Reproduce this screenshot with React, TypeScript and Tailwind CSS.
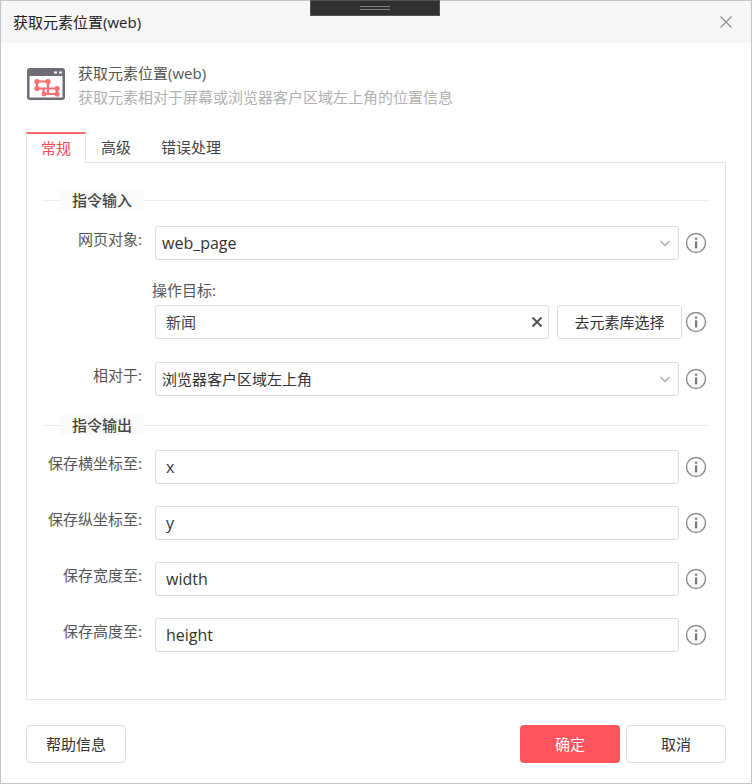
import React from "react";

const font = { fontFamily: '"Open Sans", "Noto Sans CJK SC", sans-serif' };

function Info() {
  return (
    <svg width="22" height="22" viewBox="0 0 22 22" className="shrink-0">
      <circle cx="11" cy="11" r="9.5" fill="none" stroke="#8c8c8c" strokeWidth="1.4" />
      <rect x="10" y="5.5" width="2.2" height="2.2" rx="0.6" fill="#777" />
      <rect x="10" y="9.2" width="2.2" height="7.3" rx="0.4" fill="#777" />
    </svg>
  );
}

function Chevron() {
  return (
    <svg width="10" height="7" viewBox="0 0 10 7" className="shrink-0">
      <path d="M0.5 1 L5 5.5 L9.5 1" fill="none" stroke="#a8a8a8" strokeWidth="1.4" />
    </svg>
  );
}

function Row({ label, value, select, latin, mt }: { label: string; value: string; select?: boolean; latin?: boolean; mt: string }) {
  return (
    <div className={`flex items-start ${mt}`}>
      <div className="w-[128px] pr-[13px] pt-[3px] text-right text-[15px] leading-5 text-[#555] whitespace-nowrap">{label}</div>
      <div className={`flex h-[34px] w-[524px] items-center justify-between rounded-[3px] border border-[#dcdcdc] bg-white pr-[8px] text-[#333] ${latin ? "text-[16px]" : "text-[15px]"} ${select ? "pl-[6px]" : "pl-[10px]"}`}>
        <span>{value}</span>
        {select && <Chevron />}
      </div>
      <div className="ml-[6px] mt-[6px]"><Info /></div>
    </div>
  );
}

function Section({ title, mt }: { title: string; mt: string }) {
  return (
    <div className={`relative ml-[15px] mr-[15px] h-[20px] ${mt}`}>
      <div className="absolute left-0 right-0 top-[10px] h-px bg-[#ececec]" />
      <div className="absolute left-[18px] top-0 h-[20px] w-[84px] bg-[#fafafa] text-center text-[15px] font-medium leading-5 text-[#444]">{title}</div>
    </div>
  );
}

export default function App() {
  return (
    <div style={font} className="relative flex h-[784px] w-[752px] flex-col border border-[#c4c4c4] bg-white">
      <div className="absolute left-[309px] top-[-1px] flex h-[16px] w-[130px] items-center justify-center border border-[#555] bg-[#303030]">
        <div className="h-[4px] w-[30px] border-y border-[#808080]" />
      </div>
      <div className="flex h-[42px] shrink-0 items-center justify-between bg-[#f6f6f6] pl-[12px] pr-[19px]">
        <span className="text-[15px] text-[#222]">获取元素位置(web)</span>
        <svg width="12" height="12" viewBox="0 0 12 12">
          <path d="M0.5 0.5 L11.5 11.5 M11.5 0.5 L0.5 11.5" stroke="#8a8a8a" strokeWidth="1.1" fill="none" />
        </svg>
      </div>

      <div className="flex flex-1 flex-col px-[25px]">
        <div className="flex h-[89px] shrink-0 items-start pt-[20px]">
          <svg width="38" height="32" viewBox="0 0 38 32" className="mt-[5px] ml-[1px] shrink-0">
            <rect x="0" y="0" width="38" height="32" rx="3" fill="#6f6c76" />
            <rect x="2.5" y="8" width="33" height="21.5" fill="#fff" />
            <rect x="27" y="3.5" width="3" height="2" fill="#fff" />
            <rect x="32" y="3.5" width="3" height="2" fill="#fff" />
            <path d="M10 13.5 H21 V26 M10 13.5 V20.5 H30 V26 H16.5 V20.5" fill="none" stroke="#f66f73" strokeWidth="2.2" />
            <circle cx="10" cy="13.5" r="2.6" fill="#f66f73" />
            <circle cx="21" cy="13.5" r="2.6" fill="#f66f73" />
            <circle cx="10" cy="20.5" r="2.6" fill="#f66f73" />
            <circle cx="30" cy="20.5" r="2.6" fill="#f66f73" />
            <circle cx="30" cy="26" r="2.6" fill="#f66f73" />
            <circle cx="17" cy="26" r="2.4" fill="#f66f73" />
          </svg>
          <div className="ml-[13px]">
            <div className="text-[15px] leading-5 text-[#555]">获取元素位置(web)</div>
            <div className="mt-[4px] text-[15px] leading-5 text-[#b0b0b0]">获取元素相对于屏幕或浏览器客户区域左上角的位置信息</div>
          </div>
        </div>

        <div className="relative z-10 flex h-[31px] shrink-0 items-stretch text-[15px] text-[#444]">
          <div className="flex h-[31px] w-[60px] items-center justify-center border-x border-t-2 border-x-[#e4e4e4] border-t-[#f9686d] bg-white text-[#f9474e]">常规</div>
          <div className="flex w-[60px] items-center justify-center">高级</div>
          <div className="flex w-[90px] items-center justify-center">错误处理</div>
        </div>

        <div className="-mt-px flex h-[538px] shrink-0 flex-col border border-[#e4e4e4] pt-[27px]">
          <Section title="指令输入" mt="mt-0" />
          <Row label="网页对象:" value="web_page" select latin mt="mt-[16px]" />
          <div className="ml-[125px] mt-[20px] text-[15px] leading-5 text-[#555]">操作目标:</div>
          <div className="mt-[5px] flex items-start">
            <div className="ml-[128px] flex h-[34px] w-[394px] items-center justify-between rounded-[3px] border border-[#dcdcdc] pl-[10px] pr-[5px] text-[15px] text-[#444]">
              <span>新闻</span>
              <svg width="12" height="12" viewBox="0 0 12 12">
                <path d="M1.5 1.5 L10.5 10.5 M10.5 1.5 L1.5 10.5" stroke="#555" strokeWidth="2" fill="none" />
              </svg>
            </div>
            <div className="ml-[8px] flex h-[34px] w-[125px] items-center justify-center rounded-[3px] border border-[#dcdcdc] text-[15px] text-[#333]">去元素库选择</div>
            <div className="ml-[3px] mt-[6px]"><Info /></div>
          </div>
          <Row label="相对于:" value="浏览器客户区域左上角" select mt="mt-[23px]" />
          <Section title="指令输出" mt="mt-[19px]" />
          <Row label="保存横坐标至:" value="x" latin mt="mt-[15px]" />
          <Row label="保存纵坐标至:" value="y" latin mt="mt-[22px]" />
          <Row label="保存宽度至:" value="width" latin mt="mt-[22px]" />
          <Row label="保存高度至:" value="height" latin mt="mt-[22px]" />
        </div>

        <div className="mt-[25px] flex items-start text-[15px]">
          <div className="flex h-[38px] w-[100px] items-center justify-center rounded-[4px] border border-[#dcdcdc] text-[#333]">帮助信息</div>
          <div className="ml-auto flex h-[38px] w-[100px] items-center justify-center rounded-[4px] bg-[#fe525d] text-white">确定</div>
          <div className="ml-[6px] flex h-[38px] w-[100px] items-center justify-center rounded-[4px] border border-[#dcdcdc] text-[#333]">取消</div>
        </div>
      </div>
    </div>
  );
}
